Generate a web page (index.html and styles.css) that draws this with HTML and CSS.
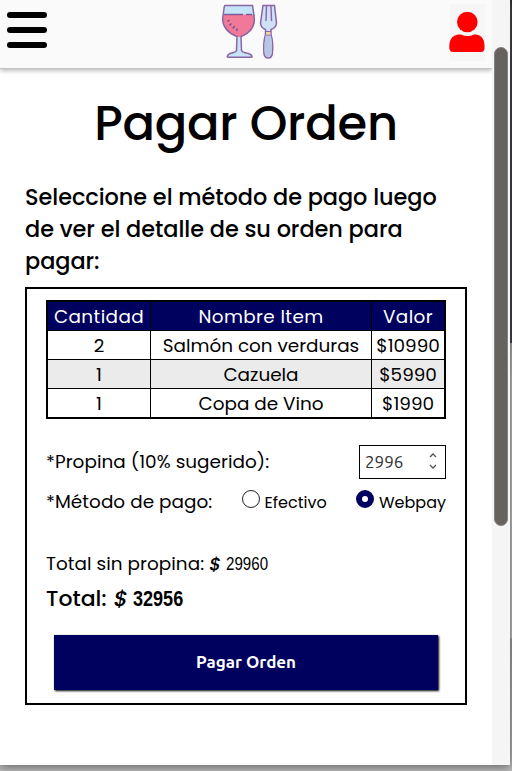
FILE: index.html
```html
<!DOCTYPE html>
<html lang="es">
<head>
<meta charset="utf-8">
<title>Pagar Orden</title>
<link rel="stylesheet" href="styles.css">
</head>
<body>
<div class="window">
  <div class="page">
    <header class="topbar">
      <div class="burger"><span></span><span></span><span></span></div>
      <svg class="logo" width="60" height="60" viewBox="0 0 60 60">
        <path d="M4.500 5.500H33L34.500 15H3z" fill="#c5e4f8"/>
        <path d="M3 14.500H34.500V22C34 30 28 34 21 37H17C9 34 4 30 3 22z" fill="#f07898"/>
        <path d="M17 37h4l.5 14c2 3 9 1 11 4v2.500H7.500V55c2-3 7-1 9-4z" fill="#c5e4f8"/>
        <path d="M3.500 14.500H23M26 14.500h6" stroke="#81589b" stroke-width="1.300"/>
        <path d="M5 5.500H32.500L34.300 18C35 27 29 33.500 21 36.500L21.500 50.500C23 54 31 52 32 56.500Q32 57.300 31 57.300H8Q7 57.300 7.500 56C8 52 15 54 16.500 50.500L17 36.500C9 33.500 2 27 2.700 18L4.300 6.500z" fill="none" stroke="#8b65a8" stroke-width="1.500" stroke-linejoin="round"/>
        <path d="M7.500 21.500l2-1.500M9.500 25.500l2-2M13 28.500l1.500-2.500M16.500 31l.7-2.500" stroke="#71558d" stroke-width="1.500"/>
        <path d="M43 5.500L40.500 23Q41 28 45.500 29.500V34.500Q43 43 44 54Q45 58 48 58Q51.500 58 52.300 54Q53.500 43 51 34.500V29.500Q56 28 56.500 23L54.500 5.500Z" fill="#cfe1f5" stroke="#8b65a8" stroke-width="1.500" stroke-linejoin="round"/>
        <path d="M46.500 6L46 20.500M51 6L51.500 20.500" stroke="#8b65a8" stroke-width="1.400" stroke-linecap="round"/>
        <path d="M45.600 35H50.800Q53 44 51.500 54Q50 57 48 57Q45.500 57 44.800 53Q44 43 45.600 35" fill="#b9c5e4"/>
        <path d="M45.500 31.500h5.500M45.500 35h5.500" stroke="#8b65a8" stroke-width="1"/>
        <path d="M46 33.500h4.500" stroke="#f7cf87" stroke-width="2"/>
      </svg>
      <svg class="user" width="36" height="58" viewBox="0 0 36 58">
        <rect x="1" width="35" height="57" fill="#f6f6f6"/>
        <circle cx="18.300" cy="18" r="10.300" fill="#f00"/>
        <path d="M9.500 30.500H12Q18.500 33.500 25 30.500H27C33 31 36 36 35.500 44Q35.500 48 32 48H4Q.5 48 .3 44C0 36 3 31 9.500 30.500z" fill="#f00"/>
      </svg>
    </header>
    <main class="content">
      <h1 class="title">Pagar Orden</h1>
      <p class="intro">Seleccione el método de pago luego<br>de ver el detalle de su orden para<br>pagar:</p>
      <section class="order">
        <table class="items">
          <thead><tr><th class="qty">Cantidad</th><th class="name">Nombre Item</th><th class="val">Valor</th></tr></thead>
          <tbody>
            <tr><td>2</td><td>Salmón con verduras</td><td>$10990</td></tr>
            <tr><td>1</td><td>Cazuela</td><td>$5990</td></tr>
            <tr><td>1</td><td>Copa de Vino</td><td>$1990</td></tr>
          </tbody>
        </table>
        <div class="row tip">
          <span class="label">*Propina (10% sugerido):</span>
          <div class="number"><span>2996</span>
            <svg width="10" height="18" viewBox="0 0 10 18"><path d="M2 5l3-3 3 3M2 13l3 3 3-3" fill="none" stroke="#555" stroke-width="1.300"/></svg>
          </div>
        </div>
        <div class="row method">
          <span class="label">*Método de pago:</span>
          <span class="option"><i class="radio"></i>Efectivo</span>
          <span class="option"><i class="radio on"></i>Webpay</span>
        </div>
        <div class="subtotal"><span>Total sin propina:</span><em>$</em><b>29960</b></div>
        <div class="total"><span>Total:</span><em>$</em><b>32956</b></div>
        <button class="submit">Pagar Orden</button>
      </section>
    </main>
  </div>
  <div class="scroll"><div class="thumb"></div></div>
</div>
</body>
</html>
```

FILE: styles.css
```css
* { box-sizing: border-box; }
body {
  margin: 0;
  height: 771px;
  overflow: hidden;
  background: linear-gradient(#202126 0 343px, #aaa 343px, #c5c5c5 380px 638px, #999 639px, #bbb 765px);
  font-family: Poppins, Inter, "Noto Sans", sans-serif;
  color: #000;
}
.window {
  display: flex;
  width: 510px;
  height: 765px;
  background: #fff;
  box-shadow: 0 1px 10px #555;
}
.page { width: 492px; height: 765px; }
.topbar {
  display: flex;
  justify-content: space-between;
  height: 69px;
  padding: 0 7px;
  background: #fafafa;
  border-bottom: 1px solid #c4c4c4;
  box-shadow: 0 2px 4px rgba(0, 0, 0, .25);
}
.burger { display: flex; flex-direction: column; gap: 9px; padding-top: 12px; width: 40px; }
.burger span { height: 6px; border-radius: 3px; background: #000; }
.logo { margin-left: 3px; }
.user { margin-top: 4px; }
.content { padding: 0 25px; }
.title {
  margin: 25px 0 0;
  height: 60px;
  font-size: 48px;
  line-height: 60px;
  font-weight: 500;
  letter-spacing: -.25px;
  text-align: center;
  white-space: nowrap;
}
.intro {
  margin: 27px 0 0;
  font-size: 22.4px;
  line-height: 32px;
  font-weight: 500;
  letter-spacing: -.04px;
  white-space: nowrap;
}
.order {
  width: 442px;
  height: 418px;
  margin-top: 10px;
  padding: 11px 19px 0;
  border: 2px solid #000;
}
.items {
  width: 400px;
  border: 2px solid #000;
  border-spacing: 0;
  table-layout: fixed;
  font-size: 18.4px;
  text-align: center;
}
.items th, .items td {
  padding: 1px 0 0;
  height: 29px;
  line-height: 27px;
  font-weight: 400;
  white-space: nowrap;
  border-top: 1px solid #000;
  border-left: 1px solid #000;
}
.items th { height: 28px; border-top: 0; background: #00005f; color: #fff; letter-spacing: .4px; }
.items th:first-child, .items td:first-child { border-left: 0; }
.items tr:nth-child(2) td { background: #ebebeb; }
.qty { width: 102px; }
.name { width: 221px; }
.val { width: 73px; }
.row { display: flex; align-items: center; width: 400px; justify-content: space-between; }
.label { font-size: 18.4px; letter-spacing: .05px; white-space: nowrap; }
.tip { margin-top: 26px; height: 34px; }
.tip .label { margin-top: -2px; }
.number {
  display: flex;
  align-items: center;
  justify-content: space-between;
  width: 87px;
  height: 34px;
  padding: 0 7px 2px 5px;
  border: 1px solid #000;
  font: 17px Ubuntu, "Noto Sans", sans-serif;
  color: #333;
}
.method { height: 40px; margin-top: 2px; }
.option { display: flex; align-items: center; gap: 5px; font-size: 16px; margin-top: 2px; }
.radio { width: 18px; height: 18px; margin-top: -7px; border: 1px solid #222; border-radius: 50%; }
.radio.on { border: 6px solid #00005f; }
.subtotal, .total { display: flex; align-items: baseline; white-space: nowrap; }
.subtotal { margin-top: 28px; height: 30px; line-height: 30px; font-size: 18.4px; letter-spacing: .05px; }
.total { margin-top: 3px; height: 35px; line-height: 34px; font-size: 22px; font-weight: 500; }
.subtotal em, .total em { margin: 0 5px; font-weight: 500; }
.total em { margin: 0 5px 0 7px; font-weight: 500; }
.subtotal b, .total b {
  font-family: "Liberation Sans Narrow", "Liberation Sans", sans-serif;
  transform: scaleX(.82);
  transform-origin: left;
}
.subtotal b { font-weight: 400; }
.submit {
  display: block;
  width: 384px;
  height: 55px;
  margin: 18px 0 0 8px;
  padding: 0 0 2px;
  border: 0;
  background: #00005f;
  color: #fff;
  font: 700 17px Ubuntu, "Noto Sans", sans-serif;
  box-shadow: 1px 1px 2px #000;
}
.scroll { width: 18px; height: 765px; padding: 47px 2px 0; background: #f5f5f5; }
.thumb { width: 14px; height: 479px; border-radius: 7px; background: #66625f; border: 1px solid #858280; }
```
